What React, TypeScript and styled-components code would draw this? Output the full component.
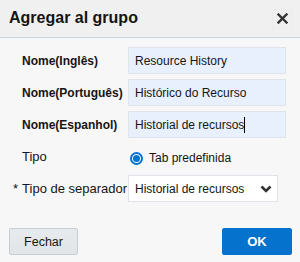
import React from "react";
import styled, { createGlobalStyle } from "styled-components";

const Global = createGlobalStyle`
  html, body { margin: 0; padding: 0; background: #f7f7f7; }
  body { font-family: "Liberation Sans", Arial, sans-serif; color: #161513; }
  * { box-sizing: border-box; }
`;

const Dialog = styled.div`
  width: 300px;
  height: 262px;
  display: flex;
  flex-direction: column;
  background: #f7f7f7;
`;

const Header = styled.div`
  height: 38px;
  display: flex;
  align-items: center;
  justify-content: space-between;
  padding: 0 8px 2px 9px;
  background: #f0f0f0;
  border-bottom: 1px solid #c7d1dd;
`;

const Title = styled.h1`
  margin: 0;
  font-size: 16px;
  font-weight: bold;
  color: #161513;
`;

const CloseButton = styled.button`
  width: 20px;
  height: 20px;
  padding: 0;
  border: 1px solid #ececec;
  background: transparent;
  display: flex;
  align-items: center;
  justify-content: center;
  margin-top: 2px;
`;

const Body = styled.div`
  padding: 9px 14px 0 22px;
  display: grid;
  grid-template-columns: 106px 158px;
  grid-auto-rows: 27px;
  row-gap: 5px;
  align-items: center;
`;

const Label = styled.label<{ $strong?: boolean }>`
  font-size: ${(p) => (p.$strong ? "12px" : "13px")};
  color: #161513;
  white-space: nowrap;
  font-weight: ${(p) => (p.$strong ? "bold" : "normal")};
`;

const Required = styled.span`
  margin-left: -9px;
  margin-right: 4px;
`;

const Input = styled.div`
  height: 27px;
  border: 1px solid #dfe4ea;
  background: #e8f0fe;
  padding: 0 6px;
  display: flex;
  align-items: center;
  font-size: 12px;
  color: #161513;
`;

const Caret = styled.span`
  display: inline-block;
  width: 1px;
  height: 16px;
  background: #000;
`;

const RadioRow = styled.div`
  display: flex;
  align-items: center;
  gap: 6px;
  font-size: 12px;
  padding-left: 2px;
  padding-top: 3px;
`;

const Radio = styled.span`
  width: 13px;
  height: 13px;
  border-radius: 50%;
  border: 2px solid #0572ce;
  background: #fff;
  display: flex;
  align-items: center;
  justify-content: center;
  &::after {
    content: "";
    width: 7px;
    height: 7px;
    border-radius: 50%;
    background: #0572ce;
  }
`;

const Select = styled.div`
  width: 150px;
  height: 27px;
  border: 1px solid #dfe4ea;
  background: #fff;
  padding: 0 4px 0 6px;
  display: flex;
  align-items: center;
  justify-content: space-between;
  font-size: 12px;
  color: #161513;
`;

const Footer = styled.div`
  margin-top: auto;
  padding: 0 8px 7px 9px;
  display: flex;
  justify-content: space-between;
`;

const Button = styled.button<{ $primary?: boolean }>`
  height: 27px;
  width: ${(p) => (p.$primary ? "70px" : "69px")};
  font-family: "Liberation Sans", Arial, sans-serif;
  font-size: ${(p) => (p.$primary ? "13px" : "12.5px")};
  font-weight: ${(p) => (p.$primary ? "bold" : "normal")};
  color: ${(p) => (p.$primary ? "#fff" : "#161513")};
  background: ${(p) => (p.$primary ? "#0572ce" : "linear-gradient(#e8ebee, #e1e5e8)")};
  border: 1px solid ${(p) => (p.$primary ? "#0572ce" : "#c4ced7")};
  border-radius: 2px;
  padding: 0;
`;

export default function App() {
  return (
    <>
      <Global />
      <Dialog>
        <Header>
          <Title>Agregar al grupo</Title>
          <CloseButton aria-label="close">
            <svg width="11" height="11" viewBox="0 0 11 11">
              <path d="M1.5 1.5 L9.5 9.5 M9.5 1.5 L1.5 9.5" stroke="#333" strokeWidth="2.4" strokeLinecap="square" />
            </svg>
          </CloseButton>
        </Header>
        <Body>
          <Label $strong>Nome(Inglês)</Label>
          <Input>Resource History</Input>
          <Label $strong>Nome(Português)</Label>
          <Input>Histórico do Recurso</Input>
          <Label $strong>Nome(Espanhol)</Label>
          <Input>
            Historial de recursos
            <Caret />
          </Input>
          <Label>Tipo</Label>
          <RadioRow>
            <Radio />
            Tab predefinida
          </RadioRow>
          <Label>
            <Required>*</Required>Tipo de separador
          </Label>
          <Select>
            Historial de recursos
            <svg width="14" height="10" viewBox="0 0 14 10">
              <path d="M2.5 2.5 L7 7 L11.5 2.5" stroke="#333" strokeWidth="2.6" fill="none" />
            </svg>
          </Select>
        </Body>
        <Footer>
          <Button>Fechar</Button>
          <Button $primary>OK</Button>
        </Footer>
      </Dialog>
    </>
  );
}
